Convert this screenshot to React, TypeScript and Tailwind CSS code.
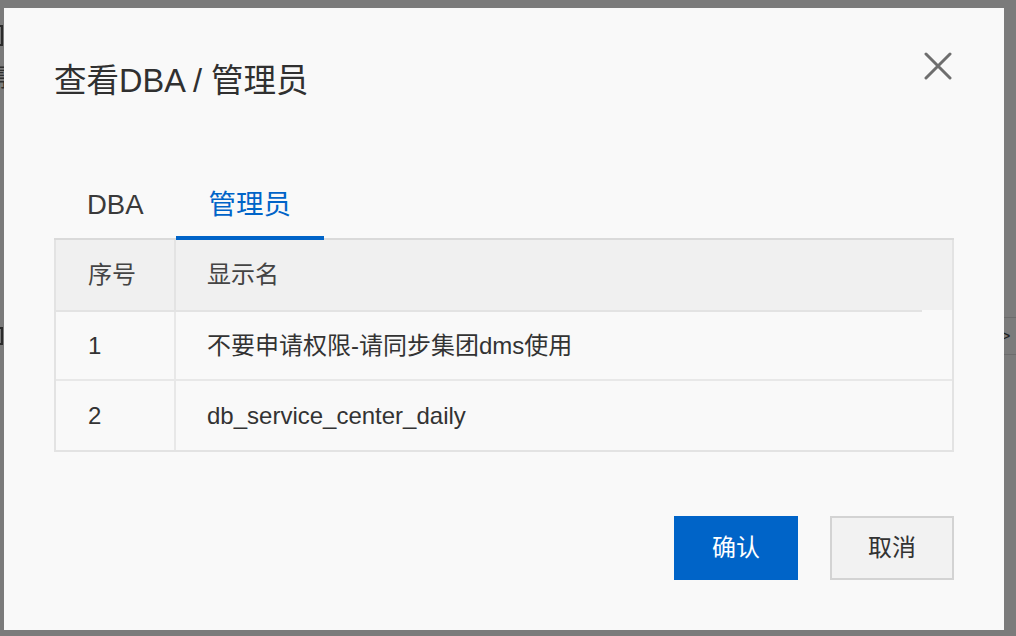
import React from "react";

const FONT = '"Liberation Sans", "Noto Sans CJK SC", sans-serif';

function CloseIcon() {
  return (
    <svg width="28" height="28" viewBox="0 0 28 28" fill="none">
      <path d="M2 2L26 26M26 2L2 26" stroke="#6e6e6e" strokeWidth="3" strokeLinecap="round" />
    </svg>
  );
}

export default function App() {
  const rows = [
    { id: "1", name: "不要申请权限-请同步集团dms使用" },
    { id: "2", name: "db_service_center_daily" },
  ];
  return (
    <div className="relative w-[1016px] h-[636px] overflow-hidden bg-[#7b7b7b]" style={{ fontFamily: FONT }}>
      {/* faint page behind the overlay */}
      <div className="flex flex-col">
        <div className="mt-[25px] -ml-[40px] w-[43px] h-[21px] border-2 border-[#2b2b2b]" />
        <div className="mt-[18px] -ml-[16px] text-[24px] leading-[28px] text-[#2f2f2f]">需</div>
        <div className="mt-[225px] flex items-center">
          <div className="-ml-[40px] w-[43px] h-[18px] border-2 border-[#2b2b2b]" />
          <div className="ml-auto w-[20px] h-[38px] border-y border-[#6c6c6c] flex items-center pl-[4px] text-[18px] text-[#222]">&gt;</div>
        </div>
      </div>

      {/* modal */}
      <div className="absolute left-[4px] top-[8px] w-[1000px] h-[622px] bg-[#f9f9f9] flex flex-col px-[50px]">
        <div className="h-[164px] flex items-start justify-between pt-[44px]">
          <div className="mt-[9px] text-[32.5px] leading-[40px] text-[#303030]">查看DBA / 管理员</div>
          <button className="mr-[2px] w-[28px] h-[28px] flex items-center justify-center">
            <CloseIcon />
          </button>
        </div>

        <div className="flex border-b-2 border-[#dadada] h-[68px]">
          <div className="pl-[33px] pr-[32px] flex items-center text-[27.5px] text-[#3a3a3a]">DBA</div>
          <div className="relative px-[33px] flex items-center text-[27.5px] text-[#0064c8]">
            管理员
            <span className="absolute left-0 right-0 -bottom-[2px] h-[4px] bg-[#0064c8]" />
          </div>
        </div>

        <div className="border-x-2 border-b-2 border-[#e3e3e3] text-[24px] text-[#333]">
          <div className="flex h-[70px] bg-[#f0f0f0] text-[#444]">
            <div className="w-[120px] flex items-center pl-[32px] border-r-2 border-[#e3e3e3]">序号</div>
            <div className="flex-1 flex items-center pl-[31px]">显示名</div>
          </div>
          <div className="flex">
            <div className="flex-1 h-[2px] bg-[#e3e3e3]" />
            <div className="w-[30px] h-[2px] bg-[#f9f9f9]" />
          </div>
          {rows.map((r, i) => (
            <div key={r.id} className={`flex h-[69px] ${i === 0 ? "border-b-2 border-[#e8e8e8]" : ""}`}>
              <div className="w-[120px] flex items-center pl-[32px] border-r-2 border-[#e8e8e8]">{r.id}</div>
              <div className="flex-1 flex items-center pl-[31px]">{r.name}</div>
            </div>
          ))}
        </div>

        <div className="mt-[64px] flex justify-end gap-[32px]">
          <button className="w-[124px] h-[64px] bg-[#0064c8] text-white text-[24px]">确认</button>
          <button className="w-[124px] h-[64px] bg-[#f2f2f2] border-2 border-[#d3d3d3] text-[#333] text-[24px]">取消</button>
        </div>
      </div>
    </div>
  );
}
